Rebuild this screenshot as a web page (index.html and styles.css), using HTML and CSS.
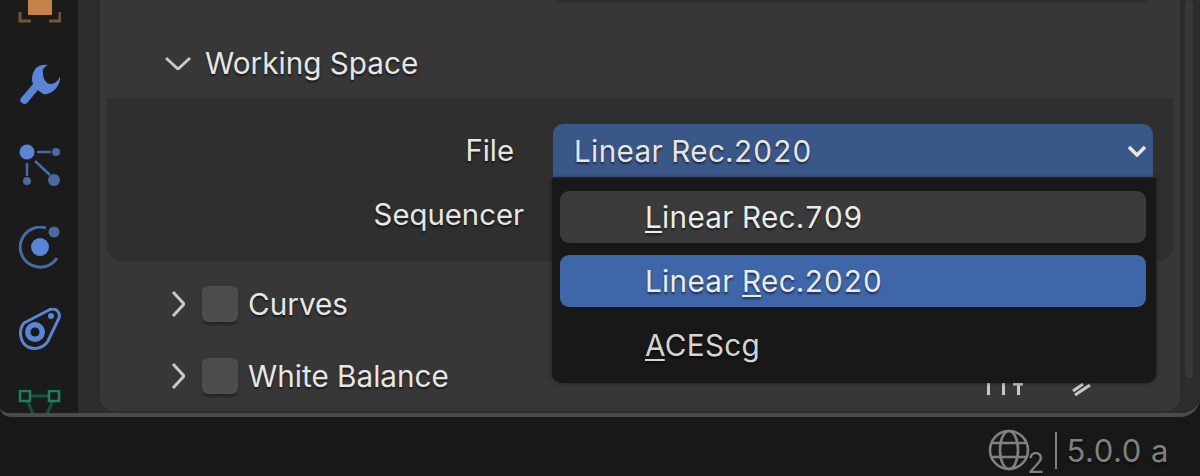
FILE: index.html
```html
<!DOCTYPE html>
<html lang="en">
<head>
  <meta charset="UTF-8" />
  <title>Working Space</title>
  <link rel="stylesheet" href="styles.css">
</head>
<body>

  <div class="editor">
    <div class="tabs">
      <svg class="tab tab-object" viewBox="0 0 44 24" width="44" height="24">
        <rect x="11" y="-8" width="24" height="23" rx="1" fill="#c4814a"/>
        <path d="M3 12v9h11M43 12v9H32" fill="none" stroke="#7c5236" stroke-width="3"/>
      </svg>
      <svg class="tab" viewBox="0 0 44 44" width="44" height="44">
        <path d="M31 3C27 5 25 8 26 11C26 17 29 22 34 22C38 22 42 18 43 14C44 22 38 30 30 32C27 33 24 31 21 28L10 41C7 44 1 39 4 36L16 22C14 17 15 11 19 6C22 3 27 2 31 3Z" fill="#5a84d4"/>
      </svg>
      <svg class="tab" viewBox="0 0 44 44" width="44" height="44">
        <g stroke="#4a6aa3" stroke-width="2.5" fill="none">
          <path d="M20 8H34M10 19V32M18 17L33 31"/>
        </g>
        <circle cx="10" cy="8" r="7.5" fill="#5a84d4"/>
        <circle cx="39" cy="8" r="4" fill="#4a6aa3"/>
        <circle cx="10" cy="37" r="4" fill="#4a6aa3"/>
        <circle cx="37" cy="36" r="6" fill="#4a6aa3"/>
      </svg>
      <svg class="tab" viewBox="0 0 44 44" width="44" height="44">
        <path d="M40 32A20 20 0 1 1 29 2" fill="none" stroke="#4a6aa3" stroke-width="3"/>
        <circle cx="23" cy="21" r="9" fill="#5a84d4"/>
        <circle cx="37" cy="6" r="5.5" fill="#4a6aa3"/>
      </svg>
      <svg class="tab" viewBox="0 0 44 44" width="44" height="44">
        <path d="M7 15L32 2C38 -1 44 4 42 10L31 33C27 40 18 42 11 39C3 35 1 22 7 15Z" fill="none" stroke="#5a84d4" stroke-width="3"/>
        <circle cx="18" cy="24" r="10" fill="#5a84d4"/>
        <circle cx="18" cy="24" r="4.5" fill="#181818"/>
        <circle cx="34" cy="8" r="3" fill="#5a84d4"/>
      </svg>
      <svg class="tab" viewBox="0 0 44 26" width="44" height="26">
        <path d="M14 6H32M10 10L16 24M36 10L30 24" fill="none" stroke="#14523e" stroke-width="3"/>
        <rect x="3" y="1" width="10" height="10" fill="none" stroke="#1c8060" stroke-width="2.5"/>
        <rect x="32" y="1" width="10" height="10" fill="none" stroke="#1c8060" stroke-width="2.5"/>
      </svg>
    </div>

    <div class="main">
      <div class="panel">
        <div class="prop-end"></div>

        <div class="subhead">
          <svg class="chevron" viewBox="0 0 26 14" width="26" height="14"><path d="M1 2L13 13L25 2"/></svg>
          <span>Working Space</span>
        </div>

        <div class="fields">
          <div class="field">
            <label>File</label>
            <div class="select">
              <span>Linear Rec.2020</span>
              <svg viewBox="0 0 20 12" width="20" height="12"><path d="M2 2L10 10L18 2"/></svg>
            </div>
          </div>
          <div class="field">
            <label class="label-seq">Sequencer</label>
          </div>
        </div>

        <div class="rows">
          <div class="row">
            <svg class="chevron" viewBox="0 0 14 26" width="14" height="26"><path d="M2 1L13 13L2 25"/></svg>
            <span class="check"></span>
            <span>Curves</span>
          </div>
          <div class="row">
            <svg class="chevron" viewBox="0 0 14 26" width="14" height="26"><path d="M2 1L13 13L2 25"/></svg>
            <span class="check"></span>
            <span>White Balance</span>
            <svg class="row-tools" viewBox="0 0 110 40" width="110" height="40">
              <path d="M4.5 20V39M19.5 20V39M34.5 28V39M29 28H39M89 35L99 28M91 39L106 29"/>
            </svg>
          </div>
        </div>
      </div>

      <div class="scrollbar"></div>

      <div class="menu">
        <div class="item hover"><span><u>L</u>inear Rec.709</span></div>
        <div class="item active"><span>Linear <u>R</u>ec.2020</span></div>
        <div class="item"><span><u>A</u>CEScg</span></div>
      </div>
    </div>
  </div>

  <div class="status">
    <svg viewBox="0 0 42 42" width="42" height="42">
      <g fill="none" stroke="#808080" stroke-width="2.6">
        <circle cx="21" cy="21" r="19"/>
        <ellipse cx="21" cy="21" rx="9" ry="19"/>
        <path d="M4 14H38M4 28H38"/>
      </g>
    </svg>
    <span class="sub">2</span>
    <span class="sep"></span>
    <span class="version">5.0.0 a</span>
  </div>

</body>
</html>
```

FILE: styles.css
```css
* {
  box-sizing: border-box;
}

body {
  margin: 0;
  width: 1200px;
  height: 476px;
  overflow: hidden;
  background: #181818;
  font-family: 'Inter', 'Liberation Sans', sans-serif;
  font-size: 29.7px;
  color: #e6e6e6;
  text-shadow: 0 2px 2px rgba(0,0,0,0.55);
}

.editor {
  display: flex;
  height: 417px;
  border-bottom: 4px solid #4b4b4b;
  border-bottom-right-radius: 20px;
  border-bottom-left-radius: 10px;
  overflow: hidden;
}

.tabs {
  width: 78px;
  background: #1b1b1b;
  display: flex;
  flex-direction: column;
  align-items: center;
  gap: 38px;
  flex-shrink: 0;
}

.tab {
  display: block;
  flex-shrink: 0;
}

.main {
  flex: 1;
  position: relative;
  background: #2c2c2c;
  padding-left: 22px;
  display: flex;
}

.panel {
  width: 1080px;
  height: 411px;
  background: #373737;
  border-radius: 0 0 14px 14px;
}

.prop-end {
  height: 3px;
  width: 593px;
  margin-left: 457px;
  background: #303030;
  border-radius: 0 0 6px 6px;
}

.subhead {
  display: flex;
  align-items: center;
  height: 95px;
  padding: 25px 0 0 65px;
  gap: 14px;
}

.chevron path,
.select svg path {
  fill: none;
  stroke: #c8c8c8;
  stroke-width: 3;
}

.select svg path {
  stroke: #e6e6e6;
  stroke-width: 3.5;
}

.fields {
  height: 163px;
  margin: 0 7px;
  background: #2f2f2f;
  border-radius: 0 0 16px 16px;
  padding-top: 26px;
}

.field {
  display: flex;
  height: 52px;
  margin-bottom: 12px;
}

.field label {
  width: 407px;
  text-align: right;
  line-height: 54px;
  font-size: 29.3px;
}

.field .label-seq {
  width: 417px;
}

.select {
  margin-left: 39px;
  width: 600px;
  height: 53px;
  background: #3b5788;
  border-radius: 10px 10px 0 0;
  display: flex;
  align-items: center;
  justify-content: space-between;
  padding: 0 6px 0 21px;
  font-feature-settings: "tnum";
  letter-spacing: 0.33px;
}

.rows {
  padding-top: 7px;
}

.row {
  display: flex;
  align-items: center;
  height: 72px;
  padding-left: 71px;
}

.row .check {
  width: 36px;
  height: 36px;
  margin-left: 17px;
  margin-right: 10px;
  background: #4d4d4d;
  border-radius: 6px;
  box-shadow: 0 3px 2px rgba(0,0,0,0.3);
}

.row-tools {
  margin-left: auto;
  margin-right: 86px;
  align-self: flex-start;
  margin-top: 16px;
}

.row-tools path {
  fill: none;
  stroke: #c8c8c8;
  stroke-width: 3;
}

.scrollbar {
  width: 8px;
  height: 378px;
  margin-left: 5px;
  background: #383838;
  border-radius: 4px;
}

.menu {
  position: absolute;
  left: 474px;
  top: 178px;
  width: 604px;
  height: 205px;
  background: #181818;
  border-radius: 0 0 10px 10px;
  padding: 13px 10px 13px 8px;
  box-shadow: 0 0 4px rgba(0,0,0,0.5);
  font-feature-settings: "tnum";
  letter-spacing: 0.3px;
}

.item {
  height: 52px;
  margin-bottom: 12px;
  border-radius: 9px;
  padding-left: 85px;
  line-height: 52px;
  color: #d4d4d4;
}

.item.hover,
.item.active {
  color: #ececec;
}

.item.hover {
  background: #3b3b3b;
}

.item.active {
  background: #3e66a8;
}

.item u {
  text-underline-offset: 3px;
}

.status {
  display: flex;
  align-items: center;
  justify-content: flex-end;
  height: 59px;
  padding: 7px 31px 0 0;
  color: #808080;
}

.status .sub {
  font-size: 28px;
  align-self: flex-end;
  line-height: 26px;
  margin: 0 11px 0 -3px;
}

.sep {
  width: 2px;
  height: 37px;
  margin-right: 9px;
  background: #808080;
}

.version {
  font-size: 31px;
  letter-spacing: 0.55px;
}
```
